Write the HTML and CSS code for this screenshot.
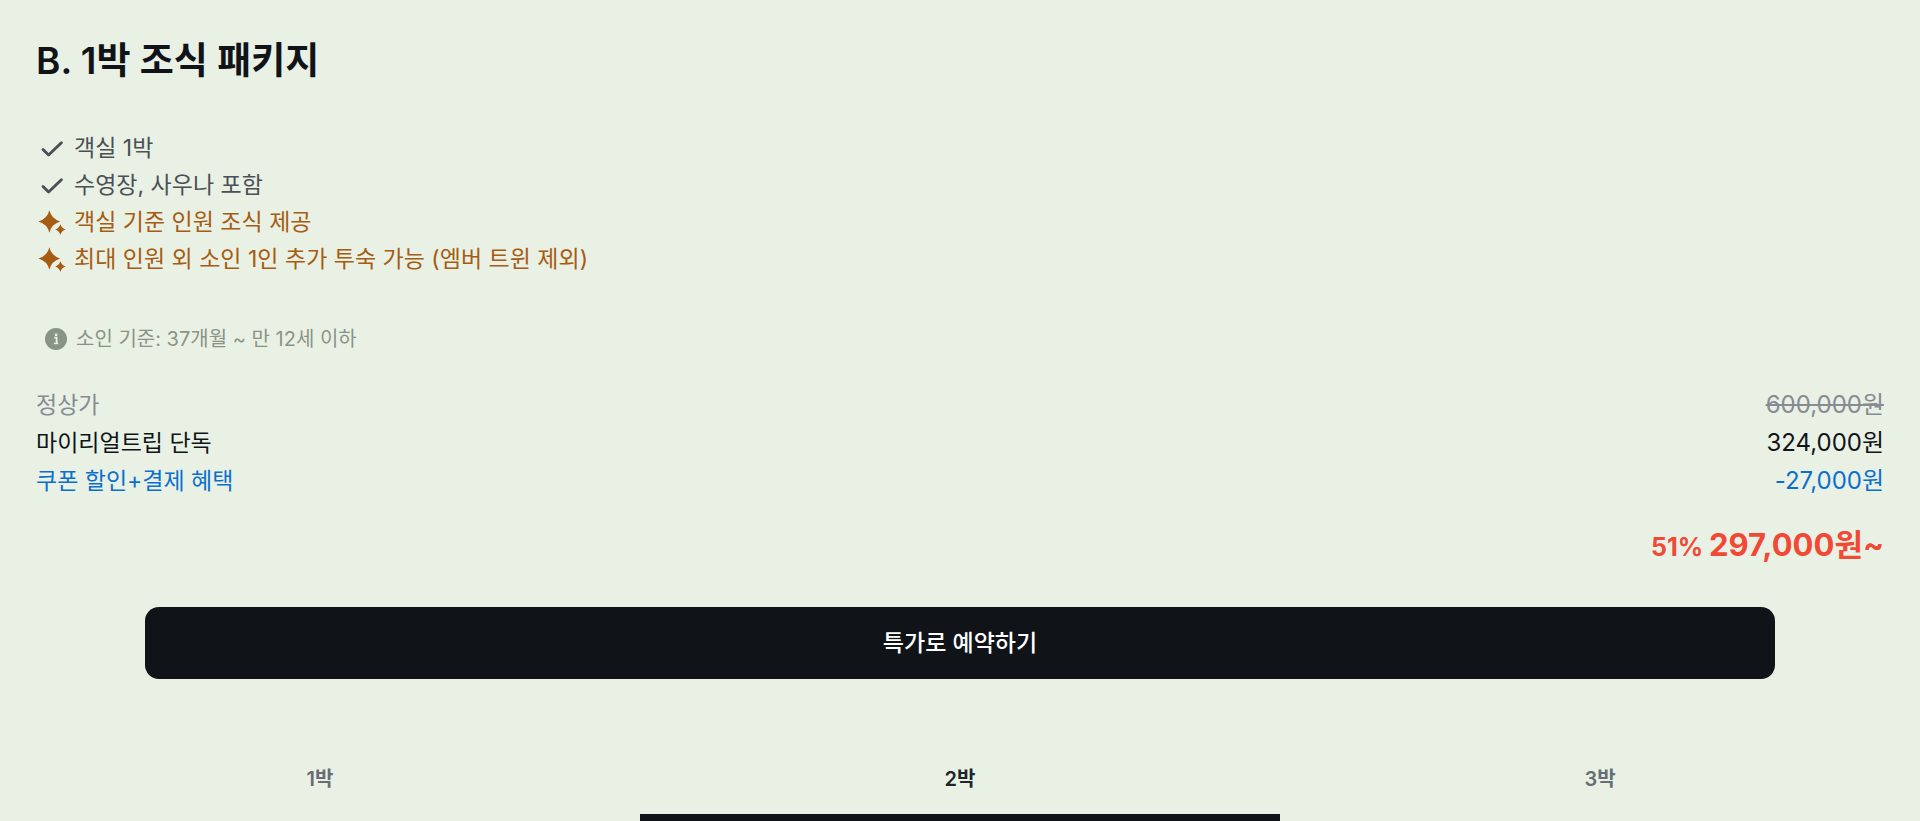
FILE: index.html
```html
<!DOCTYPE html>
<html lang="ko">
<head>
<meta charset="utf-8">
<meta name="viewport" content="width=device-width, initial-scale=1">
<title>B. 1박 조식 패키지</title>
<link rel="stylesheet" href="styles.css">
</head>
<body>
<svg class="defs" aria-hidden="true">
  <symbol id="check" viewBox="0 0 28 28"><path d="M7 14.5 12.6 20 25.4 7.7" fill="none" stroke="currentColor" stroke-width="2.9" stroke-linecap="round" stroke-linejoin="round"/></symbol>
  <symbol id="sparkle" viewBox="0 0 28 28"><path fill="currentColor" d="M13.4 1.3Q15.6 10 24.2 12.5Q15.6 15 13.4 23.7Q11.2 15 2.4 12.5Q11.2 10 13.4 1.3ZM24.4 15.3Q25.6 19.3 29.7 20.5Q25.6 21.7 24.4 25.9Q23.2 21.7 19.1 20.5Q23.2 19.3 24.4 15.3Z"/></symbol>
</svg>
<main class="package">
  <section class="offer">
    <h1 class="title">B. 1박 조식 패키지</h1>
    <ul class="benefits">
      <li class="benefit"><svg class="icon" aria-hidden="true"><use href="#check"/></svg>객실 1박</li>
      <li class="benefit"><svg class="icon" aria-hidden="true"><use href="#check"/></svg>수영장, 사우나 포함</li>
      <li class="benefit special"><svg class="icon" aria-hidden="true"><use href="#sparkle"/></svg>객실 기준 인원 조식 제공</li>
      <li class="benefit special"><svg class="icon" aria-hidden="true"><use href="#sparkle"/></svg>최대 인원 외 소인 1인 추가 투숙 가능 (엠버 트윈 제외)</li>
    </ul>
    <p class="note"><svg class="note-icon" viewBox="0 0 22 22" aria-hidden="true"><circle cx="11" cy="11" r="11" fill="#8a9486"/><path d="M9.2 9.7h2.4v5.6" fill="none" stroke="#e9f1e5" stroke-width="1.8"/><path d="M9 15.5h4.2" stroke="#e9f1e5" stroke-width="1.4"/><rect x="9.9" y="5.6" width="2.4" height="2.4" fill="#e9f1e5"/></svg>소인 기준: 37개월 ~ 만 12세 이하</p>
    <dl class="prices">
      <div class="price regular"><dt>정상가</dt><dd><s>600,000원</s></dd></div>
      <div class="price"><dt>마이리얼트립 단독</dt><dd>324,000원</dd></div>
      <div class="price discount"><dt>쿠폰 할인+결제 혜택</dt><dd>-27,000원</dd></div>
    </dl>
    <p class="total"><span class="rate">51%</span><strong class="amount">297,000원~</strong></p>
    <button class="reserve" type="button">특가로 예약하기</button>
  </section>
  <div class="tabs" role="tablist" aria-label="숙박 일수">
    <button class="tab" type="button" role="tab" aria-selected="false">1박</button>
    <button class="tab" type="button" role="tab" aria-selected="true">2박</button>
    <button class="tab" type="button" role="tab" aria-selected="false">3박</button>
  </div>
</main>
</body>
</html>
```
FILE: styles.css
```css
* { box-sizing: border-box; }
body {
  margin: 0;
  background: #e9f1e5;
  color: #101318;
  font-family: Inter, "Noto Sans CJK KR", sans-serif;
  font-size: 23px;
  line-height: 37px;
}
button { font: inherit; border: 0; cursor: pointer; }
.defs { position: absolute; width: 0; height: 0; }
.offer { display: flex; flex-direction: column; padding: 37px 36px 0; }
.title { margin: 0; font-size: 37px; line-height: 48px; font-weight: 600; }
.benefits { margin: 45px 0 0; padding: 0; list-style: none; color: #495056; }
.benefit { display: flex; align-items: center; gap: 10px; }
.special { color: #a65c12; }
.icon { width: 28px; height: 28px; overflow: visible; }
symbol { overflow: visible; }
.note {
  display: flex;
  align-items: center;
  gap: 9px;
  margin: 46px 0 0;
  padding-left: 9px;
  font-size: 20px;
  line-height: 30px;
  color: #8a9486;
}
.note-icon { width: 22px; height: 22px; }
.prices { margin: 32px 0 0; line-height: 38px; }
.price { display: flex; justify-content: space-between; }
.price dd { margin: 0; font-size: 24px; }
.regular { color: #868b94; }
.discount { color: #0b6fcd; }
.total {
  display: flex;
  justify-content: flex-end;
  align-items: baseline;
  gap: 6px;
  margin: 23px 0 0;
  line-height: 44px;
  color: #f04936;
}
.rate { font-size: 25px; font-weight: 700; }
.amount { font-size: 31px; font-weight: 700; }
.reserve {
  margin: 38px 109px 0;
  height: 72px;
  border-radius: 14px;
  background: #101318;
  color: #fff;
  font-weight: 500;
}
.tabs { display: grid; grid-template-columns: repeat(3, 1fr); margin-top: 60px; }
.tab {
  padding: 20px 0 15px;
  border-bottom: 7px solid transparent;
  background: none;
  color: #686d75;
  font-size: 20px;
  line-height: 40px;
  font-weight: 600;
}
.tab[aria-selected="true"] {
  color: #20242b;
  border-radius: 3px 3px 0 0;
  background: linear-gradient(#101318, #101318) bottom / 100% 7px no-repeat border-box;
}
```
